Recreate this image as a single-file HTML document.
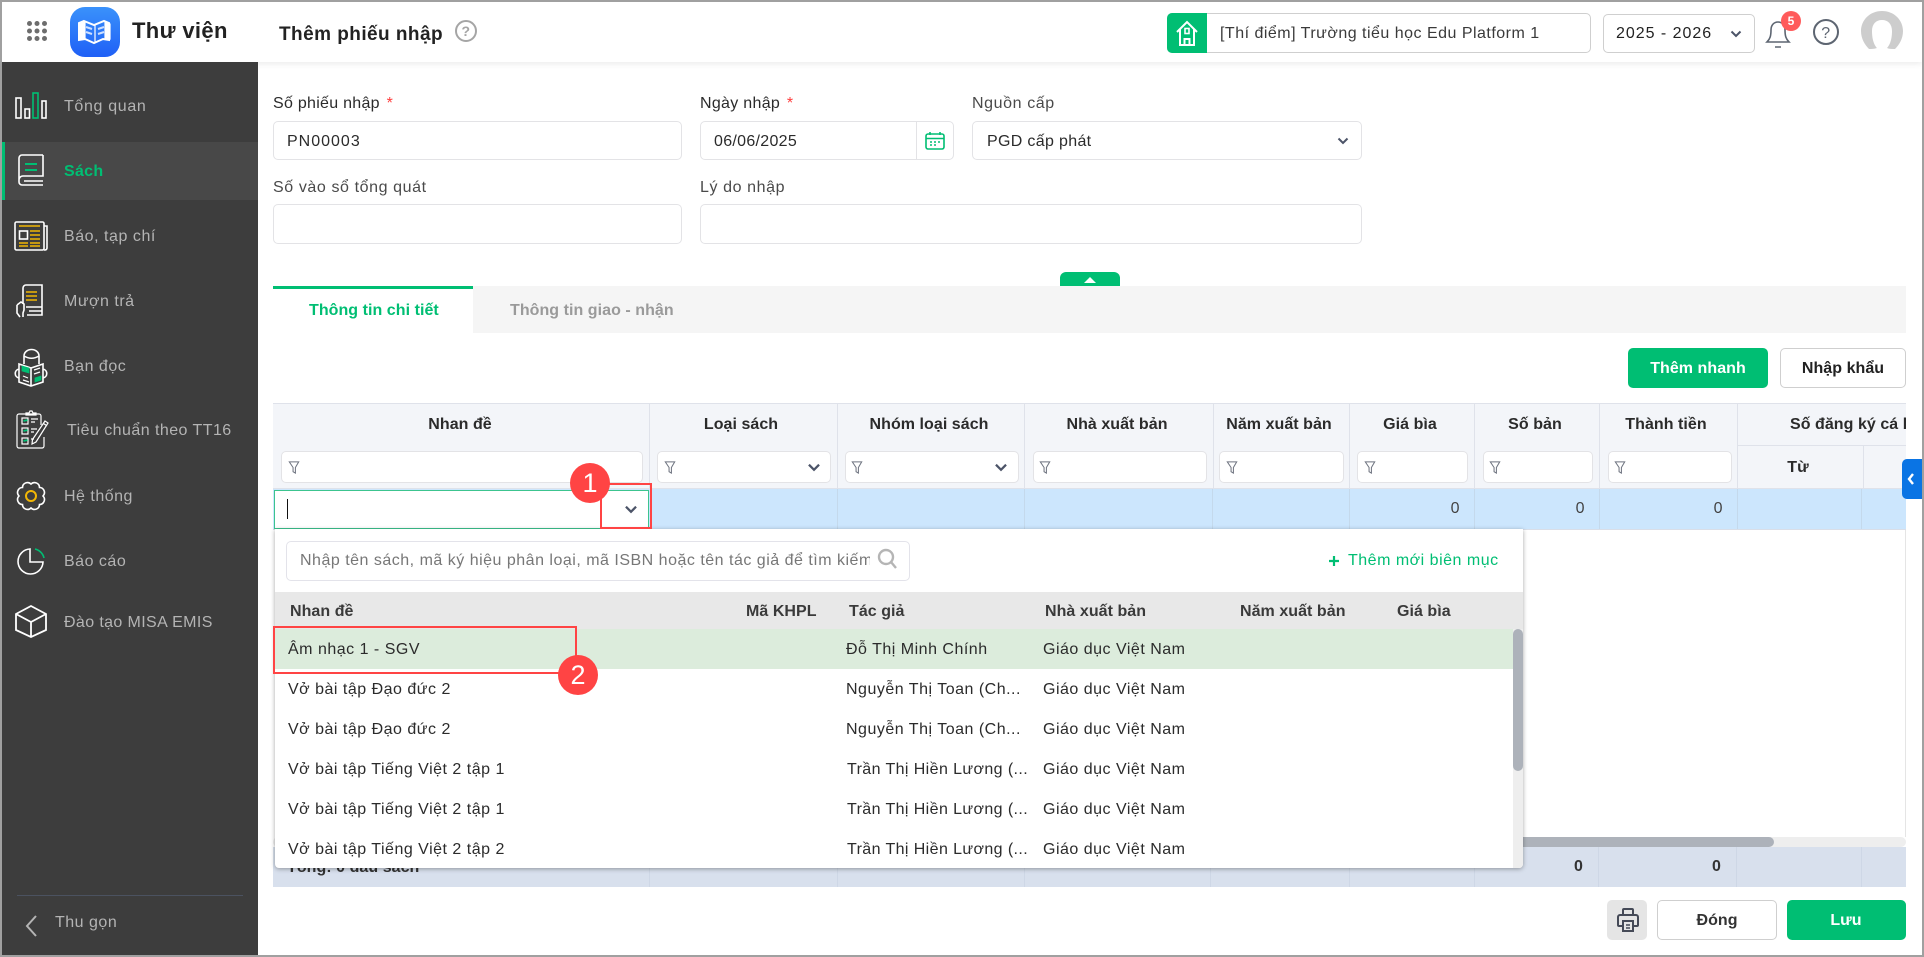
<!DOCTYPE html>
<html lang="vi"><head><meta charset="utf-8"><title>Thêm phiếu nhập</title>
<style>
html,body{margin:0;padding:0;width:1924px;height:957px;overflow:hidden;background:#fff}
body{position:relative;font-family:"Liberation Sans","DejaVu Sans",sans-serif;font-size:16px;color:#2b2b2b;letter-spacing:.5px}
.a{position:absolute;box-sizing:border-box}
.t{position:absolute;white-space:nowrap;line-height:20px;height:20px;margin-top:1px}
.c{transform:translateX(-50%)}
.r{transform:translateX(-100%)}
.b{font-weight:bold;letter-spacing:.05px}
.s{color:#b4b4b4;letter-spacing:.5px}
.g{color:#4a4a4a;letter-spacing:.6px}
.in{position:absolute;box-sizing:border-box;background:#fff;border:1px solid #e3e3e6;border-radius:5px}
.l{position:absolute;background:#dfe2ea;width:1px}
svg{position:absolute;overflow:visible}
</style></head><body>
<svg width="0" height="0" style="position:absolute"><defs>
<symbol id="f" viewBox="0 0 12 16"><path d="M1 2h10L7.500 8v6L5 12.500V8Z" fill="none" stroke="#6f7480" stroke-width="1.100"/></symbol>
<symbol id="v" viewBox="0 0 12 8"><path d="M1.500 1.500 6 6l4.500-4.500" fill="none" stroke="#4c5468" stroke-width="2"/></symbol>
</defs></svg>

<!-- header -->
<div class="a" style="left:2px;top:2px;width:1920px;height:60px;background:#fff;box-shadow:0 2px 6px rgba(0,0,0,.08)"></div>
<svg style="left:0;top:0" width="260" height="62">
<g fill="#6d6d6d"><circle cx="29.500" cy="23.500" r="2.500"/><circle cx="37" cy="23.500" r="2.500"/><circle cx="44.500" cy="23.500" r="2.500"/><circle cx="29.500" cy="31" r="2.500"/><circle cx="37" cy="31" r="2.500"/><circle cx="44.500" cy="31" r="2.500"/><circle cx="29.500" cy="38.500" r="2.500"/><circle cx="37" cy="38.500" r="2.500"/><circle cx="44.500" cy="38.500" r="2.500"/></g>
<defs><linearGradient id="lg" x1="0" y1="0" x2="0" y2="1"><stop offset="0" stop-color="#3a92fb"/><stop offset="1" stop-color="#1f60f6"/></linearGradient></defs>
<rect x="70" y="7" width="50" height="50" rx="15" fill="url(#lg)"/>
<path d="M84 21l10 4 10-4 5 2v17l-6-1-9 4-9-4-6 1V23Z" fill="none" stroke="#fff" stroke-width="2"/>
<path d="M95 25v17M80 24v15l5-1V22ZM110 24v15l-5-1V22Z" fill="#fff" stroke="#fff" stroke-width="1.200"/>
<path d="M86 27l6 2M86 32l6 2M98 29l6-2M98 34l6-2" stroke="#cfe0ff" stroke-width="2"/>
</svg>
<div class="t" style="left:132px;top:19px;font-size:22px;font-weight:bold;line-height:24px;height:24px;color:#222;letter-spacing:.35px;margin-top:0">Thư viện</div>
<div class="t" style="left:279px;top:25px;font-size:19px;font-weight:bold;color:#222;letter-spacing:.45px;margin-top:0">Thêm phiếu nhập</div>
<svg style="left:454px;top:19px" width="24" height="24" viewBox="0 0 24 24"><circle cx="12" cy="12" r="10" fill="none" stroke="#a5a5a5" stroke-width="2"/><text x="12" y="17" text-anchor="middle" font-size="14" font-weight="bold" fill="#a5a5a5" font-family="Liberation Sans">?</text></svg>

<div class="in" style="left:1167px;top:13px;width:424px;height:40px;border-color:#cfcfcf"></div>
<div class="a" style="left:1167px;top:13px;width:40px;height:40px;background:#00be73;border-radius:5px 0 0 5px"></div>
<svg style="left:1167px;top:13px" width="40" height="40"><path d="M10 19 20 9l10 10M13 16v16h14V16M17.500 32v-6h5v6" fill="none" stroke="#fff" stroke-width="2"/><rect x="18" y="15.500" width="4" height="5" fill="none" stroke="#fff" stroke-width="1.600"/></svg>
<div class="t" style="left:1220px;top:23px;color:#3a3a3a;letter-spacing:.49px">[Thí điểm] Trường tiểu học Edu Platform 1</div>
<div class="in" style="left:1603px;top:14px;width:152px;height:39px;border-color:#cfcfcf"></div>
<div class="t" style="left:1616px;top:23px;color:#222;letter-spacing:.97px">2025 - 2026</div>
<svg style="left:1730px;top:30px" width="12" height="8"><use href="#v" width="12" height="8"/></svg>
<svg style="left:1762px;top:13px" width="32" height="36"><path d="M5 29c3-3 4-6 4-12 0-5 3-8 7-8s7 3 7 8c0 6 1 9 4 12Z M13 34h6" fill="none" stroke="#5d6571" stroke-width="1.600"/></svg>
<div class="a" style="left:1781px;top:11px;width:20px;height:20px;border-radius:50%;background:#ff5b5b;color:#fff;font-weight:bold;font-size:12px;line-height:20px;text-align:center;letter-spacing:0">5</div>
<svg style="left:1813px;top:19px" width="26" height="26"><circle cx="13" cy="13" r="12" fill="none" stroke="#5d6571" stroke-width="2"/><text x="13" y="19" text-anchor="middle" font-size="16" fill="#5d6571" font-family="Liberation Sans">?</text></svg>
<svg style="left:1861px;top:10px" width="44" height="42"><path d="M21 1c12 0 21 9 21 20 0 8-4 14-8 18-3 0-6 0-8-1 2-2 5-7 5-17 0-7-4-11-10-11S11 14 11 21c0 10 3 15 5 17-3 1-6 1-8 1-4-4-8-10-8-18C0 10 9 1 21 1Z" fill="#cdcdcd"/></svg>

<!-- sidebar -->
<div class="a" style="left:2px;top:62px;width:256px;height:893px;background:#3d3d3d"></div>
<div class="a" style="left:2px;top:142px;width:256px;height:58px;background:#484848"></div>
<div class="a" style="left:2px;top:142px;width:3px;height:58px;background:#00be73"></div>
<div class="t s" style="left:64px;top:96px;letter-spacing:.66px">Tổng quan</div>
<div class="t" style="left:64px;top:161px;color:#00be73;font-weight:bold;letter-spacing:.3px">Sách</div>
<div class="t s" style="left:64px;top:226px;letter-spacing:.54px">Báo, tạp chí</div>
<div class="t s" style="left:64px;top:291px">Mượn trả</div>
<div class="t s" style="left:64px;top:356px">Bạn đọc</div>
<div class="t s" style="left:67px;top:420px;letter-spacing:.45px">Tiêu chuẩn theo TT16</div>
<div class="t s" style="left:64px;top:486px">Hệ thống</div>
<div class="t s" style="left:64px;top:551px">Báo cáo</div>
<div class="t s" style="left:64px;top:612px;letter-spacing:.38px">Đào tạo MISA EMIS</div>
<div class="t s" style="left:55px;top:912px">Thu gọn</div>
<div class="a" style="left:17px;top:895px;width:226px;height:1px;background:#4b5260"></div>
<svg style="left:0;top:0" width="258" height="957" fill="none" stroke="#fff" stroke-width="1.600">
<!-- tong quan -->
<rect x="16" y="98" width="5" height="20"/><rect x="25" y="109" width="4.500" height="9"/><rect x="33" y="93" width="5" height="25" stroke="#00be73"/><rect x="42" y="101" width="4" height="17"/>
<!-- sach -->
<path d="M43 155H22a3 3 0 0 0-3 3v24a3 3 0 0 0 3 3h21M43 155v21H23a4 4 0 0 0-4 4.500M24 181h19"/>
<path d="M25 164h12M25 170h12" stroke="#00be73" stroke-width="2"/>
<!-- bao -->
<rect x="15" y="222" width="29" height="28" rx="1.500"/><path d="M44 226h3v22a2 2 0 0 1-2 2h-1"/>
<path d="M19 226h21M30 231h10M30 235h10M30 239h10M19 243h9M30 243h10M19 246h9M30 246h10" stroke="#f2b705"/><rect x="19.500" y="231" width="8" height="8"/>
<!-- muon tra -->
<path d="M23 304V288a3 3 0 0 1 3-3h16v22H26M42 307v8H27M29 311h13"/><path d="M26 292h11M26 296h11M26 300h11" stroke="#f2b705"/><path d="M17 305l4-3 3 2v6l-1 3v4M17 305v8l3 4"/>
<!-- ban doc -->
<path d="M24 364v-8a7.500 6.500 0 0 1 15 0v8M24 356c5 3 10 3 15 0"/>
<path d="M31 368l-12-4v18l12 4 12-4v-18ZM31 368v18M19 369c-5 1-5 8 0 9M43 369c5 1 5 8 0 9"/>
<path d="M34 370l6-2M34 374l6-2M23 376l5 2M23 380l6 2" stroke-width="1.200"/>
<path d="M22 366l7 2v5l-7-2ZM35 378l6-2v4l-6 2Z" fill="#00be73" stroke="#00be73" stroke-width=".8"/>
<!-- tieu chuan -->
<path d="M41 425V416a2 2 0 0 0-2-2H19a2 2 0 0 0-2 2v30a2 2 0 0 0 2 2h23a2 2 0 0 0 2-2V437" stroke-width="1.200"/>
<path d="M26 414v-1h3l1-2 2 0 1 2h3v2H26Z" stroke-width="1.200"/>
<rect x="22" y="418" width="6" height="6" stroke-width="1.200"/><rect x="22" y="428" width="6" height="6" stroke-width="1.200"/><rect x="22" y="438" width="6" height="6" stroke-width="1.200"/>
<path d="M23.500 421l4-1M23.500 431l4-1M23.500 441l4-1" stroke="#00be73" stroke-width="1.800"/>
<path d="M31 419h7M31 422h4M31 429h6M31 432h3M31 439h3" stroke-width="1.200"/>
<path d="M45 421l3 2-12 19-4 2 .5-4.500ZM43.500 423.500l3 2" stroke-width="1.200"/>
<!-- he thong -->
<path d="M43 496A5 5 0 0 1 39.500 504.500A5 5 0 0 1 31 508A5 5 0 0 1 22.500 504.500A5 5 0 0 1 19 496A5 5 0 0 1 22.500 487.500A5 5 0 0 1 31 484A5 5 0 0 1 39.500 487.500A5 5 0 0 1 43 496Z"/>
<circle cx="31" cy="496" r="5" stroke="#f2b705" stroke-width="2"/>
<!-- bao cao -->
<path d="M30 549A12.500 12.500 0 1 0 43 562H30Z"/><path d="M35 549A12 12 0 0 1 44 558" stroke="#00be73"/>
<!-- dao tao -->
<path d="M31 606 46 614V630L31 637 16 630V614ZM16 614 31 622 46 614M31 622V637" stroke-width="1.800"/>
<!-- thu gon -->
<path d="M36 916 27 926 36 936" stroke="#b4b4b4" stroke-width="2"/>
</svg>

<!-- form -->
<div class="t" style="left:273px;top:93px;letter-spacing:.28px">Số phiếu nhập <span style="color:#ff3b3b;margin-left:2px">*</span></div>
<div class="in" style="left:273px;top:121px;width:409px;height:39px"></div>
<div class="t" style="left:287px;top:131px;letter-spacing:1px">PN00003</div>
<div class="t" style="left:700px;top:93px;letter-spacing:.3px">Ngày nhập <span style="color:#ff3b3b;margin-left:2px">*</span></div>
<div class="in" style="left:700px;top:121px;width:254px;height:39px"></div>
<div class="a" style="left:916px;top:122px;width:1px;height:37px;background:#e3e3e6"></div>
<div class="t" style="left:714px;top:131px;letter-spacing:.3px">06/06/2025</div>
<svg style="left:924px;top:131px" width="22" height="20" fill="none" stroke="#00be73" stroke-width="1.600"><rect x="2" y="3" width="18" height="15" rx="2"/><path d="M2 7.500h18M6 1v3M16 1v3"/><path d="M6 11h2M10 11h2M14 11h2M6 14h2M10 14h2" stroke-width="1.500"/></svg>
<div class="t g" style="left:972px;top:93px">Nguồn cấp</div>
<div class="in" style="left:972px;top:121px;width:390px;height:39px"></div>
<div class="t" style="left:987px;top:131px;letter-spacing:.33px">PGD cấp phát</div>
<svg style="left:1337px;top:137px" width="12" height="8"><use href="#v" width="12" height="8"/></svg>
<div class="t g" style="left:273px;top:177px">Số vào sổ tổng quát</div>
<div class="in" style="left:273px;top:204px;width:409px;height:40px"></div>
<div class="t g" style="left:700px;top:177px">Lý do nhập</div>
<div class="in" style="left:700px;top:204px;width:662px;height:40px"></div>

<!-- tabs -->
<div class="a" style="left:273px;top:286px;width:1633px;height:47px;background:#f5f5f5"></div>
<div class="a" style="left:273px;top:286px;width:200px;height:47px;background:#fff;border-top:3px solid #00be73"></div>
<div class="t b" style="left:309px;top:300px;color:#00be73">Thông tin chi tiết</div>
<div class="t b" style="left:510px;top:300px;color:#9a9a9a">Thông tin giao - nhận</div>
<div class="a" style="left:1060px;top:272px;width:60px;height:14px;background:#00be73;border-radius:6px 6px 0 0"></div>
<svg style="left:1083px;top:276px" width="14" height="8"><path d="M1 7 7 1l6 6Z" fill="#fff"/></svg>

<!-- buttons -->
<div class="a" style="left:1628px;top:348px;width:140px;height:40px;background:#00be73;border-radius:5px"></div>
<div class="t b c" style="left:1698px;top:358px;color:#fff">Thêm nhanh</div>
<div class="a" style="left:1780px;top:348px;width:126px;height:40px;background:#fff;border:1px solid #cfcfcf;border-radius:5px"></div>
<div class="t b c" style="left:1843px;top:358px;color:#222">Nhập khẩu</div>

<!-- table -->
<div class="a" style="left:273px;top:403px;width:1633px;height:484px;overflow:hidden;border-top:1px solid #dfe2ea">
 <div class="a" style="left:0;top:0;width:1633px;height:85px;background:#f3f5f9;border-bottom:1px solid #dfe2ea"></div>
 <div class="l" style="left:376px;top:0;height:85px"></div><div class="l" style="left:564px;top:0;height:85px"></div><div class="l" style="left:751px;top:0;height:85px"></div><div class="l" style="left:940px;top:0;height:85px"></div><div class="l" style="left:1076px;top:0;height:85px"></div><div class="l" style="left:1201px;top:0;height:85px"></div><div class="l" style="left:1326px;top:0;height:85px"></div><div class="l" style="left:1464px;top:0;height:85px"></div><div class="l" style="left:1590px;top:41px;height:44px"></div>
 <div class="a" style="left:1464px;top:41px;width:169px;height:1px;background:#dfe2ea"></div>
 <div class="t b c" style="left:187px;top:10px">Nhan đề</div>
 <div class="t b c" style="left:468px;top:10px">Loại sách</div>
 <div class="t b c" style="left:656px;top:10px">Nhóm loại sách</div>
 <div class="t b c" style="left:844px;top:10px">Nhà xuất bản</div>
 <div class="t b c" style="left:1006px;top:10px">Năm xuất bản</div>
 <div class="t b c" style="left:1137px;top:10px">Giá bìa</div>
 <div class="t b c" style="left:1262px;top:10px">Số bản</div>
 <div class="t b c" style="left:1393px;top:10px">Thành tiền</div>
 <div class="t b" style="left:1517px;top:10px">Số đăng ký cá biệt</div>
 <div class="t b c" style="left:1525px;top:53px">Từ</div>
 <div class="in" style="left:8px;top:47px;width:362px;height:32px"></div>
 <div class="in" style="left:384px;top:47px;width:174px;height:32px"></div>
 <div class="in" style="left:572px;top:47px;width:174px;height:32px"></div>
 <div class="in" style="left:760px;top:47px;width:174px;height:32px"></div>
 <div class="in" style="left:946px;top:47px;width:125px;height:32px"></div>
 <div class="in" style="left:1084px;top:47px;width:111px;height:32px"></div>
 <div class="in" style="left:1210px;top:47px;width:110px;height:32px"></div>
 <div class="in" style="left:1335px;top:47px;width:124px;height:32px"></div>
 <svg style="left:15px;top:56px" width="12" height="15"><use href="#f" width="12" height="15"/></svg>
 <svg style="left:391px;top:56px" width="12" height="15"><use href="#f" width="12" height="15"/></svg>
 <svg style="left:578px;top:56px" width="12" height="15"><use href="#f" width="12" height="15"/></svg>
 <svg style="left:766px;top:56px" width="12" height="15"><use href="#f" width="12" height="15"/></svg>
 <svg style="left:953px;top:56px" width="12" height="15"><use href="#f" width="12" height="15"/></svg>
 <svg style="left:1091px;top:56px" width="12" height="15"><use href="#f" width="12" height="15"/></svg>
 <svg style="left:1216px;top:56px" width="12" height="15"><use href="#f" width="12" height="15"/></svg>
 <svg style="left:1341px;top:56px" width="12" height="15"><use href="#f" width="12" height="15"/></svg>
 <svg style="left:534px;top:59px" width="14" height="9"><use href="#v" width="14" height="9"/></svg>
 <svg style="left:721px;top:59px" width="14" height="9"><use href="#v" width="14" height="9"/></svg>
 <!-- row -->
 <div class="a" style="left:0;top:85px;width:1633px;height:41px;background:#cce6fd;border-bottom:1px solid #d9dee8"></div>
 <div class="l" style="left:564px;top:85px;height:40px;background:#c4d9ec"></div><div class="l" style="left:751px;top:85px;height:40px;background:#c4d9ec"></div><div class="l" style="left:939px;top:85px;height:40px;background:#c4d9ec"></div><div class="l" style="left:1076px;top:85px;height:40px;background:#c4d9ec"></div><div class="l" style="left:1201px;top:85px;height:40px;background:#c4d9ec"></div><div class="l" style="left:1326px;top:85px;height:40px;background:#c4d9ec"></div><div class="l" style="left:1464px;top:85px;height:40px;background:#c4d9ec"></div><div class="l" style="left:1588px;top:85px;height:40px;background:#c4d9ec"></div>
 <div class="a" style="left:1px;top:86px;width:375px;height:39px;background:#fff;border:1px solid #3cc48f"></div>
 <div class="a" style="left:14px;top:95px;width:1px;height:20px;background:#111"></div>
 <svg style="left:351px;top:101px" width="14" height="9"><use href="#v" width="14" height="9"/></svg>
 <div class="t r" style="left:1187px;top:94px;color:#444">0</div>
 <div class="t r" style="left:1312px;top:94px;color:#444">0</div>
 <div class="t r" style="left:1450px;top:94px;color:#444">0</div>
 <!-- right edge line -->
 <div class="a" style="left:1632px;top:126px;width:1px;height:307px;background:#e5e5e5"></div>
 <!-- h scrollbar -->
 <div class="a" style="left:0;top:433px;width:1633px;height:10px;background:#eee;border-radius:5px"></div>
 <div class="a" style="left:600px;top:433px;width:901px;height:10px;background:#adb2ba;border-radius:5px"></div>
 <!-- footer -->
 <div class="a" style="left:0;top:443px;width:1633px;height:41px;background:#d8e0ed"></div>
 <div class="l" style="left:376px;top:443px;height:41px;background:#ced7e6"></div><div class="l" style="left:564px;top:443px;height:41px;background:#ced7e6"></div><div class="l" style="left:751px;top:443px;height:41px;background:#ced7e6"></div><div class="l" style="left:937px;top:443px;height:41px;background:#ced7e6"></div><div class="l" style="left:1076px;top:443px;height:41px;background:#ced7e6"></div><div class="l" style="left:1201px;top:443px;height:41px;background:#ced7e6"></div><div class="l" style="left:1325px;top:443px;height:41px;background:#ced7e6"></div><div class="l" style="left:1463px;top:443px;height:41px;background:#ced7e6"></div><div class="l" style="left:1588px;top:443px;height:41px;background:#ced7e6"></div>
 <div class="t b" style="left:14px;top:453px;color:#333">Tổng: 0 đầu sách</div>
 <div class="t r b" style="left:1310px;top:452px;color:#333">0</div>
 <div class="t r b" style="left:1448px;top:452px;color:#333">0</div>
</div>

<!-- blue tab -->
<div class="a" style="left:1902px;top:459px;width:20px;height:40px;background:#0a74e4;border-radius:5px 0 0 5px"></div>
<svg style="left:1906px;top:472px" width="10" height="14"><path d="M7 2 3 7l4 5" fill="none" stroke="#fff" stroke-width="2.400"/></svg>

<!-- popup -->
<div class="a" style="left:275px;top:529px;width:1248px;height:339px;background:#fff;border-radius:0 0 4px 4px;box-shadow:0 1px 5px rgba(0,0,0,.35);overflow:hidden">
 <div class="in" style="left:11px;top:12px;width:624px;height:40px;border-color:#e3e3ea"></div>
 <div class="t" style="left:25px;top:21px;width:570px;overflow:hidden;color:#777">Nhập tên sách, mã ký hiệu phân loại, mã ISBN hoặc tên tác giả để tìm kiếm</div>
 <svg style="left:601px;top:18px" width="24" height="24" fill="none" stroke="#b5b5b5" stroke-width="2.400"><circle cx="10" cy="10" r="7"/><path d="M15 15l5 6"/></svg>
 <svg style="left:1053px;top:26px" width="12" height="12"><path d="M6 1v10M1 6h10" stroke="#00be73" stroke-width="2.200"/></svg>
 <div class="t" style="left:1073px;top:21px;color:#00be73">Thêm mới biên mục</div>
 <div class="a" style="left:0;top:63px;width:1248px;height:37px;background:#e8e8e8"></div>
 <div class="t b" style="left:15px;top:72px;color:#3a3a3a">Nhan đề</div>
 <div class="t b" style="left:471px;top:72px;color:#3a3a3a">Mã KHPL</div>
 <div class="t b" style="left:574px;top:72px;color:#3a3a3a">Tác giả</div>
 <div class="t b" style="left:770px;top:72px;color:#3a3a3a">Nhà xuất bản</div>
 <div class="t b" style="left:965px;top:72px;color:#3a3a3a">Năm xuất bản</div>
 <div class="t b" style="left:1122px;top:72px;color:#3a3a3a">Giá bìa</div>
 <div class="a" style="left:0;top:100px;width:1238px;height:40px;background:#dcecdc"></div>
 <div class="t" style="left:13px;top:110px">Âm nhạc 1 - SGV</div><div class="t" style="left:571px;top:110px">Đỗ Thị Minh Chính</div><div class="t" style="left:768px;top:110px">Giáo dục Việt Nam</div>
 <div class="t" style="left:13px;top:150px">Vở bài tập Đạo đức 2</div><div class="t" style="left:571px;top:150px">Nguyễn Thị Toan (Ch...</div><div class="t" style="left:768px;top:150px">Giáo dục Việt Nam</div>
 <div class="t" style="left:13px;top:190px">Vở bài tập Đạo đức 2</div><div class="t" style="left:571px;top:190px">Nguyễn Thị Toan (Ch...</div><div class="t" style="left:768px;top:190px">Giáo dục Việt Nam</div>
 <div class="t" style="left:13px;top:230px">Vở bài tập Tiếng Việt 2 tập 1</div><div class="t" style="left:572px;top:230px;letter-spacing:.4px">Trần Thị Hiền Lương (...</div><div class="t" style="left:768px;top:230px">Giáo dục Việt Nam</div>
 <div class="t" style="left:13px;top:270px">Vở bài tập Tiếng Việt 2 tập 1</div><div class="t" style="left:572px;top:270px;letter-spacing:.4px">Trần Thị Hiền Lương (...</div><div class="t" style="left:768px;top:270px">Giáo dục Việt Nam</div>
 <div class="t" style="left:13px;top:310px">Vở bài tập Tiếng Việt 2 tập 2</div><div class="t" style="left:572px;top:310px;letter-spacing:.4px">Trần Thị Hiền Lương (...</div><div class="t" style="left:768px;top:310px">Giáo dục Việt Nam</div>
 <div class="a" style="left:1238px;top:100px;width:10px;height:239px;background:#eee"></div>
 <div class="a" style="left:1238px;top:100px;width:10px;height:142px;background:#adb2ba;border-radius:5px"></div>
</div>

<!-- annotations -->
<div class="a" style="left:600px;top:483px;width:52px;height:46px;border:2px solid #f44"></div>
<div class="a" style="left:570px;top:463px;width:40px;height:40px;border-radius:50%;background:#ff4444;color:#fff;font-size:27px;line-height:40px;text-align:center;letter-spacing:0">1</div>
<div class="a" style="left:273px;top:626px;width:304px;height:48px;border:2px solid #f44"></div>
<div class="a" style="left:558px;top:655px;width:40px;height:40px;border-radius:50%;background:#ff4444;color:#fff;font-size:27px;line-height:40px;text-align:center;letter-spacing:0">2</div>

<!-- bottom buttons -->
<div class="a" style="left:1607px;top:900px;width:40px;height:40px;background:#e5e5e5;border-radius:5px"></div>
<svg style="left:1616px;top:907px" width="24" height="26" fill="none" stroke="#454a57" stroke-width="2"><path d="M7 8V3a1 1 0 0 1 1-1h8a1 1 0 0 1 1 1v5M6 19H3a1 1 0 0 1-1-1V10a2 2 0 0 1 2-2h16a2 2 0 0 1 2 2v8a1 1 0 0 1-1 1h-3"/><rect x="7" y="14" width="10" height="10"/><path d="M10 18h4M10 21h4" stroke-width="1.500"/></svg>
<div class="a" style="left:1657px;top:900px;width:120px;height:40px;background:#fff;border:1px solid #cfcfcf;border-radius:5px"></div>
<div class="t b c" style="left:1717px;top:910px;color:#333">Đóng</div>
<div class="a" style="left:1787px;top:900px;width:119px;height:40px;background:#00be73;border-radius:5px"></div>
<div class="t b c" style="left:1846px;top:910px;color:#fff">Lưu</div>

<!-- frame -->
<div class="a" style="left:0;top:0;width:1924px;height:957px;border:2px solid #a0a0a0;pointer-events:none"></div>
</body></html>
